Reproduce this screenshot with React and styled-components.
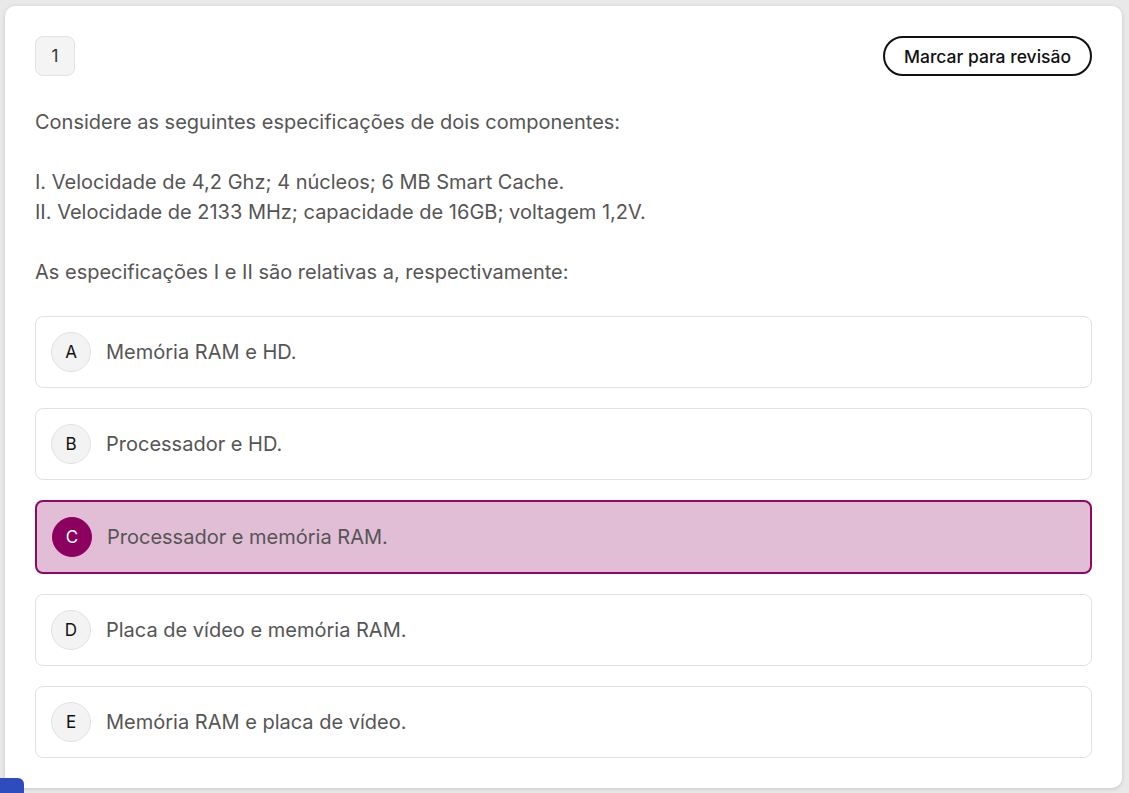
import React, { useState } from 'react';
import styled, { createGlobalStyle } from 'styled-components';

const GlobalStyle = createGlobalStyle`
  html, body {
    margin: 0;
    padding: 0;
    background: #e9e9e9;
    font-family: Inter, "Noto Sans", sans-serif;
  }
  * { box-sizing: border-box; }
`;

const options = [
  { letter: 'A', text: 'Memória RAM e HD.' },
  { letter: 'B', text: 'Processador e HD.' },
  { letter: 'C', text: 'Processador e memória RAM.' },
  { letter: 'D', text: 'Placa de vídeo e memória RAM.' },
  { letter: 'E', text: 'Memória RAM e placa de vídeo.' },
];

function App() {
  const [selected, setSelected] = useState('C');
  return (
    <Page>
      <GlobalStyle />
      <Card>
        <Header>
          <Number>1</Number>
          <ReviewButton>Marcar para revisão</ReviewButton>
        </Header>
        <Statement>
          <p>Considere as seguintes especificações de dois componentes:</p>
          <Blank />
          <p>I. Velocidade de 4,2 Ghz; 4 núcleos; 6 MB Smart Cache.</p>
          <p>II. Velocidade de 2133 MHz; capacidade de 16GB; voltagem 1,2V.</p>
          <Blank />
          <p>As especificações I e II são relativas a, respectivamente:</p>
        </Statement>
        <Options>
          {options.map(o => (
            <Option
              key={o.letter}
              $active={selected === o.letter}
              onClick={() => setSelected(o.letter)}
            >
              <Letter $active={selected === o.letter}>{o.letter}</Letter>
              <OptionText>{o.text}</OptionText>
            </Option>
          ))}
        </Options>
      </Card>
      <FloatTab />
    </Page>
  );
}

export default App;

const Page = styled.div`
  padding: 6px 7px 5px 5px;
  min-height: 793px;
`;

const Card = styled.div`
  background: #fff;
  border-radius: 10px;
  box-shadow: 0 1px 4px rgba(0, 0, 0, 0.15);
  padding: 30px 30px 30px 30px;
`;

const Header = styled.div`
  display: flex;
  justify-content: space-between;
  align-items: center;
  height: 40px;
`;

const Number = styled.div`
  width: 40px;
  height: 40px;
  border-radius: 8px;
  background: #f4f4f4;
  border: 1px solid #e3e3e3;
  display: flex;
  align-items: center;
  justify-content: center;
  font-size: 17px;
  color: #333;
`;

const ReviewButton = styled.button`
  height: 40px;
  padding: 0 19px;
  border-radius: 20px;
  border: 2px solid #111;
  background: #fff;
  font-family: inherit;
  font-size: 17.5px;
  font-weight: 500;
  color: #111;
  cursor: pointer;
`;

const Statement = styled.div`
  margin-top: 31px;
  font-size: 20px;
  line-height: 30px;
  color: #555;

  p {
    margin: 0;
  }
`;

const Blank = styled.div`
  height: 30px;
`;

const Options = styled.div`
  margin-top: 29px;
  display: flex;
  flex-direction: column;
  gap: 20px;
`;

const Option = styled.div`
  display: flex;
  align-items: center;
  gap: 15px;
  padding: 15px;
  border-radius: 8px;
  border: ${p => (p.$active ? '2px solid #8c0a62' : '1px solid #e2e2e2')};
  background: ${p => (p.$active ? '#e1bed6' : '#fff')};
  cursor: pointer;
`;

const Letter = styled.div`
  width: 40px;
  height: 40px;
  border-radius: 50%;
  flex-shrink: 0;
  display: flex;
  align-items: center;
  justify-content: center;
  font-size: 17px;
  background: ${p => (p.$active ? '#8c005f' : '#f3f3f3')};
  border: 1px solid ${p => (p.$active ? '#8c005f' : '#e2e2e2')};
  color: ${p => (p.$active ? '#fff' : '#111')};
`;

const OptionText = styled.span`
  font-size: 20px;
  color: #555;
`;

const FloatTab = styled.div`
  position: fixed;
  left: 0;
  bottom: 0;
  width: 24px;
  height: 15px;
  background: #2f4cbf;
  border-top-right-radius: 6px;
`;
